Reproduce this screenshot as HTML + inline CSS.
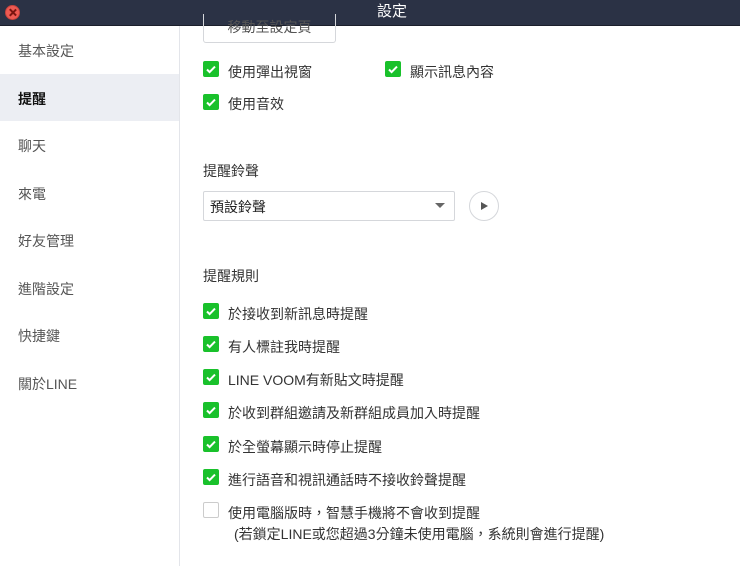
<!DOCTYPE html>
<html><head><meta charset="utf-8"><style>
*{margin:0;padding:0;box-sizing:border-box}
body{width:740px;height:566px;overflow:hidden;background:#fff;font-family:"Liberation Sans","Noto Sans CJK TC",sans-serif;position:relative;color:#333}
.title{position:absolute;left:0;top:0;width:740px;height:26px;background:#2b3245;color:#fff;font-size:15px;line-height:24px;border-bottom:1px solid #1b1f2b}
.title span{position:absolute;left:377px;top:0}
.close{position:absolute;left:5px;top:5px;width:15px;height:15px;border-radius:50%;background:#ee5a52;border:1px solid #c9433d}
.close:before,.close:after{content:"";position:absolute;left:6px;top:2px;width:1.6px;height:9px;background:#7a1510;transform:rotate(45deg)}
.close:after{transform:rotate(-45deg)}
.side{position:absolute;left:0;top:26px;width:180px;height:540px;border-right:1px solid #e3e5ea;background:#fff}
.side div{height:47.5px;line-height:50px;padding-left:18px;font-size:14px;color:#555}
.side .sel{background:#eceef3;color:#111;font-weight:bold}
.t{position:absolute;font-size:14px;color:#333;white-space:nowrap}
.cb{position:absolute;width:16px;height:16px;background:#19c12b;border-radius:2px}
.cb svg{position:absolute;left:2px;top:2px}
.cb.off{background:#fff;border:1px solid #ccc}
.btn{position:absolute;left:203px;top:14px;width:133px;height:29px;border:1px solid #d5d7db;border-top:none;border-radius:0 0 3px 3px;font-size:14px;color:#555;text-align:center;overflow:hidden}
.btn span{position:absolute;left:0;right:0;top:3px}
</style></head><body>
<div class="title"><div class="close"></div><span>設定</span></div>
<div class="side">
<div>基本設定</div><div class="sel">提醒</div><div>聊天</div><div>來電</div><div>好友管理</div><div>進階設定</div><div>快捷鍵</div><div>關於LINE</div>
</div>
<div class="btn"><span>移動至設定頁</span></div>

<div class="cb" style="left:203px;top:61px"><svg width="12" height="12"><path d="M2 6.5l2.6 2.6L10 3.6" stroke="#fff" stroke-width="2" fill="none"/></svg></div>
<div class="t" style="left:228px;top:62px">使用彈出視窗</div>
<div class="cb" style="left:385px;top:61px"><svg width="12" height="12"><path d="M2 6.5l2.6 2.6L10 3.6" stroke="#fff" stroke-width="2" fill="none"/></svg></div>
<div class="t" style="left:410px;top:62px">顯示訊息內容</div>
<div class="cb" style="left:203px;top:94px"><svg width="12" height="12"><path d="M2 6.5l2.6 2.6L10 3.6" stroke="#fff" stroke-width="2" fill="none"/></svg></div>
<div class="t" style="left:228px;top:94px">使用音效</div>

<div class="t" style="left:203px;top:161px">提醒鈴聲</div>
<div style="position:absolute;left:203px;top:191px;width:252px;height:30px;border:1px solid #d5d7db;border-radius:2px"></div>
<div class="t" style="left:210px;top:197px;color:#222">預設鈴聲</div>
<div style="position:absolute;left:435px;top:203px;border-left:5px solid transparent;border-right:5px solid transparent;border-top:5px solid #666"></div>
<div style="position:absolute;left:469px;top:191px;width:30px;height:30px;border:1px solid #d5d7db;border-radius:50%"></div>
<div style="position:absolute;left:481px;top:202px;border-top:4.5px solid transparent;border-bottom:4.5px solid transparent;border-left:7px solid #555"></div>

<div class="t" style="left:203px;top:266px">提醒規則</div>

<div class="cb" style="left:203px;top:303px"><svg width="12" height="12"><path d="M2 6.5l2.6 2.6L10 3.6" stroke="#fff" stroke-width="2" fill="none"/></svg></div>
<div class="t" style="left:228px;top:304px">於接收到新訊息時提醒</div>
<div class="cb" style="left:203px;top:336px"><svg width="12" height="12"><path d="M2 6.5l2.6 2.6L10 3.6" stroke="#fff" stroke-width="2" fill="none"/></svg></div>
<div class="t" style="left:228px;top:337px">有人標註我時提醒</div>
<div class="cb" style="left:203px;top:369px"><svg width="12" height="12"><path d="M2 6.5l2.6 2.6L10 3.6" stroke="#fff" stroke-width="2" fill="none"/></svg></div>
<div class="t" style="left:228px;top:370px">LINE VOOM有新貼文時提醒</div>
<div class="cb" style="left:203px;top:402px"><svg width="12" height="12"><path d="M2 6.5l2.6 2.6L10 3.6" stroke="#fff" stroke-width="2" fill="none"/></svg></div>
<div class="t" style="left:228px;top:403px">於收到群組邀請及新群組成員加入時提醒</div>
<div class="cb" style="left:203px;top:436px"><svg width="12" height="12"><path d="M2 6.5l2.6 2.6L10 3.6" stroke="#fff" stroke-width="2" fill="none"/></svg></div>
<div class="t" style="left:228px;top:437px">於全螢幕顯示時停止提醒</div>
<div class="cb" style="left:203px;top:469px"><svg width="12" height="12"><path d="M2 6.5l2.6 2.6L10 3.6" stroke="#fff" stroke-width="2" fill="none"/></svg></div>
<div class="t" style="left:228px;top:470px">進行語音和視訊通話時不接收鈴聲提醒</div>
<div class="cb off" style="left:203px;top:502px"></div>
<div class="t" style="left:228px;top:503px">使用電腦版時，智慧手機將不會收到提醒</div>
<div class="t" style="left:234px;top:524px">(若鎖定LINE或您超過3分鐘未使用電腦，系統則會進行提醒)</div>
</body></html>
